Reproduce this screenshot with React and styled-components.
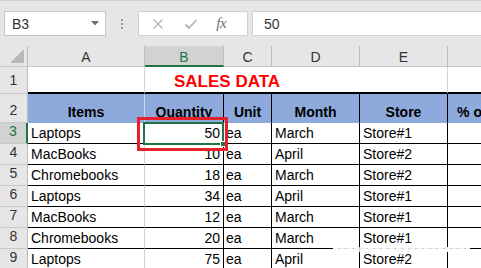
import React from 'react';
import styled, { createGlobalStyle } from 'styled-components';

const GlobalStyle = createGlobalStyle`
  html, body { margin: 0; padding: 0; background: #ffffff; }
  body { font-family: "Liberation Sans", Arial, sans-serif; overflow: hidden; }
  * { box-sizing: border-box; }
`;

const COLS = '28px 117px 79px 48px 88px 88px 85px';
const GREEN = '#217346';
const GRID = '#d4d4d4';
const HEAD_BG = '#e6e6e6';

const Window = styled.div`
  width: 481px;
  height: 268px;
  overflow: hidden;
  background: #fff;
`;

const FormulaBar = styled.div`
  height: 46px;
  background: ${HEAD_BG};
  border-top: 1px solid #d2d2d2;
  display: flex;
  align-items: flex-start;
  padding: 10px 0 0 4px;
`;

const NameBox = styled.div`
  width: 102px;
  height: 25px;
  background: #fff;
  border: 1px solid #c6c6c6;
  display: flex;
  align-items: center;
  justify-content: space-between;
  padding: 0 6px 0 7px;
  font-size: 14px;
  color: #333;
`;

const Grip = styled.div`
  width: 32px;
  height: 25px;
  display: flex;
  flex-direction: column;
  align-items: center;
  justify-content: center;
  gap: 2px;
  & > span {
    width: 2px;
    height: 2px;
    background: #9a9a9a;
  }
`;

const ButtonBox = styled.div`
  width: 110px;
  height: 25px;
  background: #fff;
  border: 1px solid #d2d2d2;
  display: flex;
  align-items: center;
  padding: 0 0 0 13px;
`;

const IconSlot = styled.div`
  width: 36px;
  display: flex;
  align-items: center;
  justify-content: flex-start;
`;

const Fx = styled.span`
  font-family: "Liberation Serif", "DejaVu Serif", serif;
  font-style: italic;
  font-size: 15px;
  color: #707070;
  letter-spacing: -0.5px;
  margin-left: 1px;
`;

const FormulaInput = styled.div`
  flex: 1;
  margin-left: 4px;
  height: 25px;
  background: #fff;
  border: 1px solid #d2d2d2;
  border-right: none;
  display: flex;
  align-items: center;
  padding-left: 11px;
  font-size: 14px;
  color: #333;
`;

const Sheet = styled.div`
  position: relative;
  width: 481px;
  overflow: hidden;
`;

const Row = styled.div`
  display: grid;
  grid-template-columns: ${COLS};
  height: ${(p) => p.$h}px;
`;

const Head = styled.div`
  position: relative;
  background: ${(p) => (p.$active ? '#d2d2d2' : HEAD_BG)};
  color: ${(p) => (p.$active ? GREEN : '#333')};
  border-right: 1px solid #bcbcbc;
  border-bottom: ${(p) => (p.$active ? `2px solid ${GREEN}` : '1px solid #c8c8c8')};
  display: flex;
  align-items: flex-end;
  justify-content: center;
  font-size: 14px;
  line-height: 16px;
  padding-bottom: ${(p) => (p.$active ? 0 : 1)}px;
`;

const RowNum = styled.div`
  background: ${(p) => (p.$activeRow ? '#d2d2d2' : HEAD_BG)};
  color: ${(p) => (p.$activeRow ? GREEN : '#333')};
  border-right: ${(p) => (p.$activeRow ? `2px solid ${GREEN}` : '1px solid #bcbcbc')};
  border-bottom: 1px solid #c8c8c8;
  display: flex;
  align-items: flex-end;
  justify-content: center;
  font-size: 14px;
  line-height: 17px;
  padding-bottom: ${(p) => p.$pb ?? 3}px;
`;

const Cell = styled.div`
  background: ${(p) => p.$bg || '#fff'};
  border-right: 1px solid ${(p) => p.$rc || '#000'};
  border-bottom: ${(p) => p.$bw ?? 1}px solid ${(p) => p.$bc || '#000'};
  display: flex;
  align-items: flex-end;
  justify-content: ${(p) => p.$justify || 'flex-start'};
  padding: 0 3px 1px ${(p) => p.$pl ?? 3}px;
  font-size: 14px;
  line-height: 17px;
  font-weight: ${(p) => (p.$bold ? 700 : 400)};
  color: #000;
  white-space: nowrap;
  grid-column: ${(p) => p.$span || 'auto'};
`;

const Title = styled(Cell)`
  font-size: 17px;
  font-weight: 700;
  color: #ff0000;
  line-height: 20px;
  padding-left: 29px;
  padding-bottom: 0;
`;

const Selection = styled.div`
  position: absolute;
  left: 143px;
  top: 76px;
  width: 81px;
  height: 23px;
  border: 2px solid ${GREEN};
  pointer-events: none;
`;

const FillHandle = styled.div`
  position: absolute;
  right: -4px;
  bottom: -4px;
  width: 6px;
  height: 6px;
  background: ${GREEN};
  border: 1px solid #fff;
`;

const Callout = styled.div`
  position: absolute;
  left: 137px;
  top: 71px;
  width: 91px;
  height: 34px;
  border: 3px solid #e8202a;
  pointer-events: none;
`;

const Speckle = styled.div`
  position: absolute;
  left: 333px;
  top: 201px;
  width: 137px;
  height: 5px;
  background: repeating-linear-gradient(90deg, rgba(255,255,255,0.95) 0 5px, rgba(255,255,255,0.8) 5px 7px);
  pointer-events: none;
`;

const Xicon = () => (
  <svg width="12" height="12" viewBox="0 0 12 12">
    <path d="M1.5 1.5 L10.5 10.5 M10.5 1.5 L1.5 10.5" stroke="#b3b3b3" strokeWidth="1.4" fill="none" />
  </svg>
);

const CheckIcon = () => (
  <svg width="14" height="12" viewBox="0 0 14 12">
    <path d="M1.5 6.5 L5 10 L12.5 2" stroke="#b3b3b3" strokeWidth="1.8" fill="none" />
  </svg>
);

const Caret = () => (
  <svg width="8" height="5" viewBox="0 0 8 5">
    <path d="M0 0 L8 0 L4 4.5 Z" fill="#707070" />
  </svg>
);

const Corner = () => (
  <svg width="28" height="20" viewBox="0 0 28 20" style={{ position: 'absolute', left: 0, top: 0 }}>
    <polygon points="24,3 24,17 10,17" fill="#b8b8b8" />
  </svg>
);

const data = [
  ['Laptops', 50, 'ea', 'March', 'Store#1'],
  ['MacBooks', 10, 'ea', 'April', 'Store#2'],
  ['Chromebooks', 18, 'ea', 'March', 'Store#2'],
  ['Laptops', 34, 'ea', 'April', 'Store#1'],
  ['MacBooks', 12, 'ea', 'March', 'Store#1'],
  ['Chromebooks', 20, 'ea', 'March', 'Store#1'],
  ['Laptops', 75, 'ea', 'April', 'Store#2'],
];

const letters = ['A', 'B', 'C', 'D', 'E', ''];
const headers = ['Items', 'Quantity', 'Unit', 'Month', 'Store', '% of Total'];

export default function App() {
  return (
    <Window>
      <GlobalStyle />
      <FormulaBar>
        <NameBox>
          <span>B3</span>
          <Caret />
        </NameBox>
        <Grip>
          <span />
          <span />
          <span />
        </Grip>
        <ButtonBox>
          <IconSlot><Xicon /></IconSlot>
          <IconSlot><CheckIcon /></IconSlot>
          <IconSlot><Fx>fx</Fx></IconSlot>
        </ButtonBox>
        <FormulaInput>50</FormulaInput>
      </FormulaBar>
      <Sheet>
        <Row $h={21}>
          <Head><Corner /></Head>
          {letters.map((l, i) => (
            <Head key={i} $active={l === 'B'}>{l}</Head>
          ))}
        </Row>
        <Row $h={27}>
          <RowNum $pb={4}>1</RowNum>
          <Cell $rc={GRID} $bw={2} />
          <Title $rc={GRID} $bw={2} $span="span 4">SALES DATA</Title>
          <Cell $rc={GRID} $bw={2} />
        </Row>
        <Row $h={29}>
          <RowNum>2</RowNum>
          {headers.map((h, i) => (
            <Cell
              key={h}
              $bg="#8ea9db"
              $bold
              $justify="center"
              $rc={i === 0 ? '#c9d4ea' : '#000'}
              $bc="#8ea9db"
            >
              {h}
            </Cell>
          ))}
        </Row>
        {data.map((r, idx) => (
          <Row $h={21} key={idx}>
            <RowNum $activeRow={idx === 0}>{idx + 3}</RowNum>
            <Cell $rc={GRID}>{r[0]}</Cell>
            <Cell $justify="flex-end">{r[1]}</Cell>
            <Cell $pl={2}>{r[2]}</Cell>
            <Cell>{r[3]}</Cell>
            <Cell>{r[4]}</Cell>
            <Cell />
          </Row>
        ))}
        <Selection>
          <FillHandle />
        </Selection>
        <Callout />
        <Speckle />
      </Sheet>
    </Window>
  );
}
